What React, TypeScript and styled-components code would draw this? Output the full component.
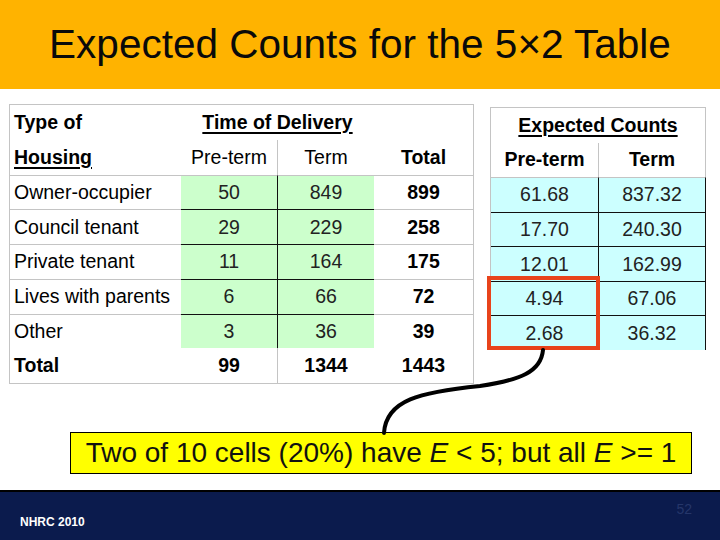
import React from "react";
import styled, { createGlobalStyle } from "styled-components";

const GlobalStyle = createGlobalStyle`
  html, body { margin: 0; padding: 0; background: #ffffff; }
  body { font-family: "Liberation Sans", Arial, sans-serif; color: #000; }
  * { box-sizing: border-box; }
`;

const Page = styled.div`
  width: 720px;
  height: 540px;
  display: flex;
  flex-direction: column;
  overflow: hidden;
`;

const TitleBar = styled.header`
  height: 89px;
  background: #ffb300;
  display: flex;
  align-items: center;
  justify-content: center;
`;

const Title = styled.h1`
  margin: 0;
  font-size: 40.5px;
  font-weight: normal;
  color: #0a0a0a;
`;

const Main = styled.main`
  position: relative;
  height: 401px;
  padding: 15px 0 0 9px;
  display: flex;
  flex-direction: column;
`;

const TablesRow = styled.div`
  display: flex;
  align-items: flex-start;
  gap: 16px;
`;

const ObservedGrid = styled.div`
  flex: none;
  display: grid;
  grid-template-columns: 171px 96px 97px 99px;
  grid-template-rows: repeat(8, 1fr);
  width: 465px;
  height: 280px;
  border: 1px solid #c4c4c4;
  background: #fff;
`;

const ExpectedWrap = styled.div`
  flex: none;
  position: relative;
  width: 216px;
  margin-top: 3px;
`;

const ExpectedGrid = styled.div`
  display: grid;
  grid-template-columns: 107px 108px;
  grid-template-rows: repeat(7, 1fr);
  width: 216px;
  height: 243px;
  border-top: 1px solid #c4c4c4;
  border-left: 1px solid #c4c4c4;
`;

type CellProps = {
  $top?: string;
  $left?: string;
  $right?: string;
  $bg?: string;
  $align?: "left" | "center";
  $bold?: boolean;
  $span?: number;
  $ink?: string;
};

const Cell = styled.div<CellProps>`
  display: flex;
  align-items: center;
  justify-content: ${(p) => (p.$align === "left" ? "flex-start" : "center")};
  padding-left: ${(p) => (p.$align === "left" ? "4px" : "0")};
  min-width: 0;
  font-size: 19.5px;
  font-weight: ${(p) => (p.$bold ? "bold" : "normal")};
  color: ${(p) => p.$ink || "#000"};
  background: ${(p) => p.$bg || "transparent"};
  border-top: ${(p) => (p.$top ? `1px solid ${p.$top}` : "none")};
  border-left: ${(p) => (p.$left ? `1px solid ${p.$left}` : "none")};
  border-right: ${(p) => (p.$right ? `1px solid ${p.$right}` : "none")};
  grid-column: ${(p) => (p.$span ? `span ${p.$span}` : "auto")};
  white-space: nowrap;
`;

const Under = styled.span`
  text-decoration: underline;
  text-underline-offset: 3px;
  text-decoration-thickness: 2px;
`;

const Highlight = styled.div`
  position: absolute;
  left: -3px;
  top: 169px;
  width: 113px;
  height: 74px;
  border: 4px solid #e8431b;
  pointer-events: none;
`;

const Connector = styled.svg`
  position: absolute;
  left: 0;
  top: 0;
  width: 720px;
  height: 401px;
  pointer-events: none;
`;

const Callout = styled.div`
  margin: 48px 0 0 61px;
  width: 622px;
  height: 42px;
  background: #ffff00;
  border: 1px solid #000;
  display: flex;
  align-items: center;
  justify-content: center;
  font-size: 28px;
  color: #111;
  position: relative;
`;

const Footer = styled.footer`
  height: 50px;
  background: #0b1b4d;
  border-top: 2px solid #000;
  display: flex;
  justify-content: space-between;
  padding: 9px 28px 11px 20px;
`;

const FooterNote = styled.span`
  align-self: flex-end;
  color: #ffffff;
  font-weight: bold;
  font-size: 12px;
`;

const PageNum = styled.span`
  align-self: flex-start;
  color: #25366a;
  font-size: 14px;
`;

const GRAY = "#c4c4c4";
const DARK = "#111";
const GREEN = "#ccffcc";
const CYAN = "#ccffff";

const observed = [
  ["Owner-occupier", "50", "849", "899"],
  ["Council tenant", "29", "229", "258"],
  ["Private tenant", "11", "164", "175"],
  ["Lives with parents", "6", "66", "72"],
  ["Other", "3", "36", "39"],
];

const expected = [
  ["61.68", "837.32"],
  ["17.70", "240.30"],
  ["12.01", "162.99"],
  ["4.94", "67.06"],
  ["2.68", "36.32"],
];

export default function App() {
  return (
    <>
      <GlobalStyle />
      <Page>
        <TitleBar>
          <Title>Expected Counts for the 5×2 Table</Title>
        </TitleBar>
        <Main>
          <TablesRow>
            <ObservedGrid>
              <Cell $align="left" $bold>Type of</Cell>
              <Cell $span={2} $bold>
                <Under>Time of Delivery</Under>
              </Cell>
              <Cell />
              <Cell $align="left" $bold>
                <Under>Housing</Under>
              </Cell>
              <Cell>Pre-term</Cell>
              <Cell $left={GRAY}>Term</Cell>
              <Cell $bold>Total</Cell>
              {observed.map((r, i) => {
                const line = i === 0 ? GRAY : DARK;
                return (
                  <React.Fragment key={r[0]}>
                    <Cell $align="left" $top={GRAY}>{r[0]}</Cell>
                    <Cell $top={line} $bg={GREEN} $ink="#222">{r[1]}</Cell>
                    <Cell $top={line} $left={DARK} $bg={GREEN} $ink="#222">{r[2]}</Cell>
                    <Cell $top={GRAY} $bold>{r[3]}</Cell>
                  </React.Fragment>
                );
              })}
              <Cell $align="left" $bold>Total</Cell>
              <Cell $bold>99</Cell>
              <Cell $left={GRAY} $bold>1344</Cell>
              <Cell $bold>1443</Cell>
            </ObservedGrid>

            <ExpectedWrap>
              <ExpectedGrid>
                <Cell $span={2} $bold $right={GRAY}>
                  <Under>Expected Counts</Under>
                </Cell>
                <Cell $bold>Pre-term</Cell>
                <Cell $bold $left={GRAY} $right={GRAY}>Term</Cell>
                {expected.map((r, i) => {
                  const line = i === 0 ? GRAY : DARK;
                  return (
                    <React.Fragment key={r[0]}>
                      <Cell $top={line} $bg={CYAN} $ink="#222">{r[0]}</Cell>
                      <Cell $top={line} $left={DARK} $right={DARK} $bg={CYAN} $ink="#222">{r[1]}</Cell>
                    </React.Fragment>
                  );
                })}
              </ExpectedGrid>
              <Highlight />
            </ExpectedWrap>
          </TablesRow>

          <Callout>
            Two of 10 cells (20%) have&nbsp;<i>E</i>&nbsp;&lt; 5; but all&nbsp;<i>E</i>&nbsp;&gt;= 1
          </Callout>

          <Connector viewBox="0 89 720 401">
            <path
              d="M 543 350 C 541 372 520 380 480 386 C 420 392 386 400 384 433"
              fill="none"
              stroke="#000"
              strokeWidth="4"
              strokeLinecap="round"
            />
          </Connector>
        </Main>
        <Footer>
          <FooterNote>NHRC 2010</FooterNote>
          <PageNum>52</PageNum>
        </Footer>
      </Page>
    </>
  );
}
